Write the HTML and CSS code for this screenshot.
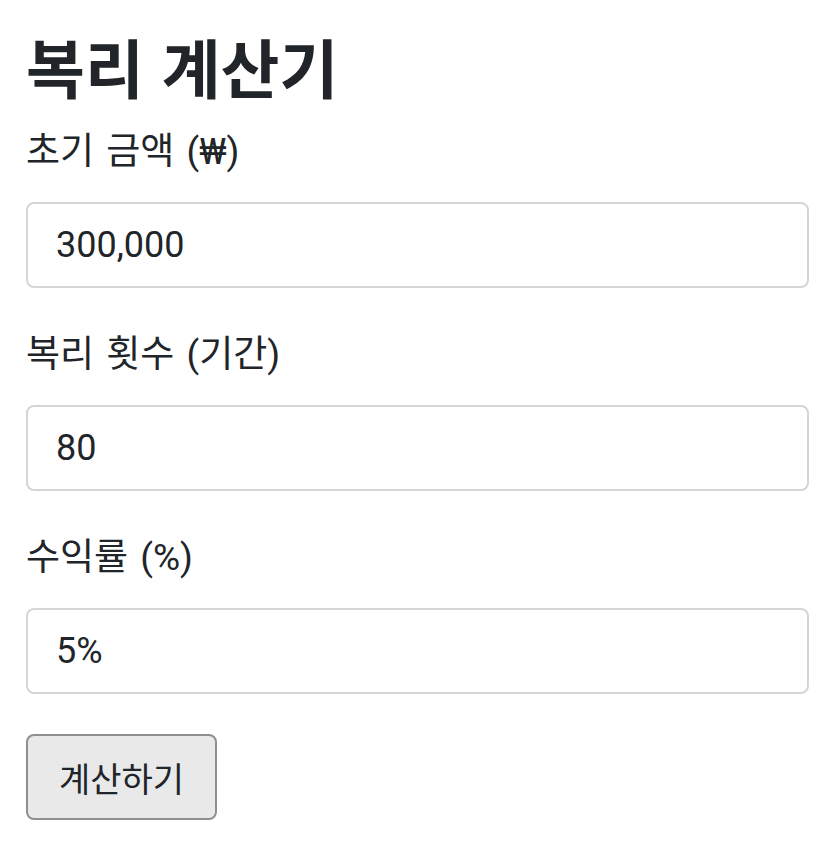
FILE: index.html
```html
<!DOCTYPE html>
<html lang="ko">
<head>
<meta charset="utf-8">
<link rel="stylesheet" href="styles.css">
</head>
<body>
<main class="calc">
  <h1 class="title">복리 계산기</h1>
  <label class="label" for="amount">초기 금액 (₩)</label>
  <input class="field" id="amount" type="text" value="300,000">
  <label class="label" for="periods">복리 횟수 (기간)</label>
  <input class="field" id="periods" type="text" value="80">
  <label class="label" for="rate">수익률 (%)</label>
  <input class="field" id="rate" type="text" value="5%">
  <button class="btn" type="button">계산하기</button>
</main>
</body>
</html>
```

FILE: styles.css
```css
html, body {
  margin: 0;
  padding: 0;
  background: #ffffff;
}
body {
  font-family: Roboto, "Noto Sans CJK KR", sans-serif;
  color: #212529;
}
.calc {
  display: flex;
  flex-direction: column;
  align-items: flex-start;
  padding: 30px 26px 0 26px;
}
.title {
  font-family: "Noto Sans CJK KR", sans-serif;
  font-size: 64px;
  font-weight: 700;
  line-height: 70px;
  margin: 0 0 28px 0;
}
.label {
  font-family: Roboto, "Noto Sans CJK KR", sans-serif;
  font-size: 37px;
  word-spacing: 3px;
  line-height: 48px;
  margin: 0 0 26px 0;
}
.field {
  box-sizing: border-box;
  width: 100%;
  height: 86px;
  margin: 0 0 43px 0;
  padding: 0 28px;
  border: 2px solid #d3d6d9;
  border-radius: 8px;
  background: #ffffff;
  font-family: Roboto, "Noto Sans CJK KR", sans-serif;
  font-size: 36px;
  color: #212529;
  outline: none;
}
.field:last-of-type {
  margin-bottom: 40px;
}
.btn {
  box-sizing: border-box;
  height: 86px;
  padding: 0 31px;
  border: 2px solid #8f8f8f;
  border-radius: 8px;
  background: #e9e9e9;
  font-family: "Noto Sans CJK KR", sans-serif;
  font-size: 34px;
  color: #212529;
}
```
